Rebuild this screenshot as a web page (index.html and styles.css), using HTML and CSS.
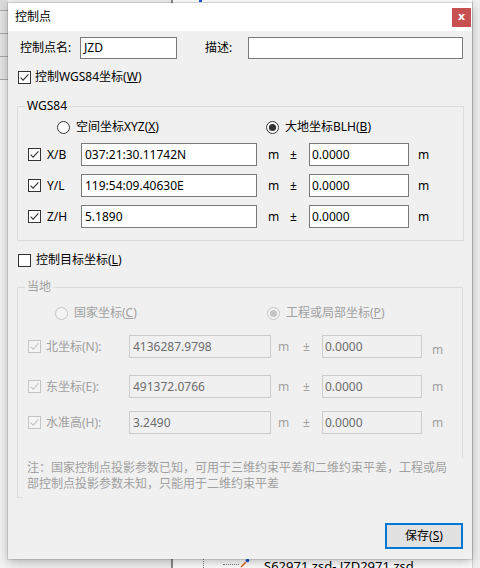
FILE: index.html
```html
<!DOCTYPE html>
<html lang="zh-CN">
<head>
<meta charset="utf-8">
<title>控制点</title>
<link rel="stylesheet" href="styles.css">
</head>
<body>
<div class="app">
  <div class="app-left">
    <div class="tb-btn tb-first"></div>
    <div class="tb-btn"></div>
    <div class="tb-btn"></div>
    <div class="tb-btn"></div>
  </div>
  <div class="app-mid">
    <div class="app-top">
      <div class="top-panel"></div>
      <div class="top-main"><span class="blue-mark"></span></div>
    </div>
    <div class="app-fill"></div>
    <div class="tree-row">
      <div class="panel-left"></div>
      <div class="tree">
        <span class="dot-v"></span>
        <span class="dot-h"></span>
        <svg class="tree-icon" width="10" height="10" viewBox="0 0 10 10"><path d="M1 9 L6 4" stroke="#e06a1b" stroke-width="1.6"/><circle cx="7.5" cy="2.5" r="1.8" fill="#1a56d6"/></svg>
        <span class="tree-text">S62971.zsd- JZD2971.zsd</span>
      </div>
    </div>
  </div>
  <div class="app-right"></div>

  <div class="dialog">
    <div class="titlebar">
      <span class="title">控制点</span>
      <span class="close">x</span>
    </div>
    <div class="dlg-body">
      <div class="row-name">
        <span class="lbl-name">控制点名:</span>
        <div class="txt txt-name">JZD</div>
        <span class="lbl-desc">描述:</span>
        <div class="txt txt-desc"></div>
      </div>

      <div class="chk-row">
        <svg class="chk" width="13" height="13" viewBox="0 0 13 13"><rect x="0.5" y="0.5" width="12" height="12" fill="#fff" stroke="#333"/><polyline points="2.6,6.6 5.1,9.1 10.4,3.4" fill="none" stroke="#333" stroke-width="1.1"/></svg>
        <span>控制WGS84坐标(<u>W</u>)</span>
      </div>

      <fieldset class="grp grp-wgs">
        <legend class="grp-legend">WGS84</legend>
        <div class="radio-row r1">
          <div class="radio-item ri-first">
            <svg width="13" height="13" viewBox="0 0 13 13"><circle cx="6.5" cy="6.5" r="6" fill="#fff" stroke="#333"/></svg>
            <span>空间坐标XYZ(<u>X</u>)</span>
          </div>
          <div class="radio-item">
            <svg width="13" height="13" viewBox="0 0 13 13"><circle cx="6.5" cy="6.5" r="6" fill="#fff" stroke="#333"/><circle cx="6.5" cy="6.5" r="3.6" fill="#333"/></svg>
            <span>大地坐标BLH(<u>B</u>)</span>
          </div>
        </div>

        <div class="data-row dr1 first">
          <svg class="chk" width="13" height="13" viewBox="0 0 13 13"><rect x="0.5" y="0.5" width="12" height="12" fill="#fff" stroke="#333"/><polyline points="2.6,6.6 5.1,9.1 10.4,3.4" fill="none" stroke="#333" stroke-width="1.1"/></svg>
          <span class="dlbl">X/B</span>
          <div class="txt val1">037:21:30.11742N</div>
          <span class="unit">m</span>
          <span class="pm">±</span>
          <div class="txt val2">0.0000</div>
          <span class="unit2">m</span>
        </div>
        <div class="data-row dr1">
          <svg class="chk" width="13" height="13" viewBox="0 0 13 13"><rect x="0.5" y="0.5" width="12" height="12" fill="#fff" stroke="#333"/><polyline points="2.6,6.6 5.1,9.1 10.4,3.4" fill="none" stroke="#333" stroke-width="1.1"/></svg>
          <span class="dlbl">Y/L</span>
          <div class="txt val1">119:54:09.40630E</div>
          <span class="unit">m</span>
          <span class="pm">±</span>
          <div class="txt val2">0.0000</div>
          <span class="unit2">m</span>
        </div>
        <div class="data-row dr1">
          <svg class="chk" width="13" height="13" viewBox="0 0 13 13"><rect x="0.5" y="0.5" width="12" height="12" fill="#fff" stroke="#333"/><polyline points="2.6,6.6 5.1,9.1 10.4,3.4" fill="none" stroke="#333" stroke-width="1.1"/></svg>
          <span class="dlbl">Z/H</span>
          <div class="txt val1">5.1890</div>
          <span class="unit">m</span>
          <span class="pm">±</span>
          <div class="txt val2">0.0000</div>
          <span class="unit2">m</span>
        </div>
      </fieldset>

      <div class="chk-row chk-row2">
        <svg class="chk" width="13" height="13" viewBox="0 0 13 13"><rect x="0.5" y="0.5" width="12" height="12" fill="#fff" stroke="#333"/></svg>
        <span>控制目标坐标(<u>L</u>)</span>
      </div>

      <fieldset class="grp grp-local">
        <legend class="grp-legend dis">当地</legend>
        <div class="radio-row r2">
          <div class="radio-item ri-first2 dis">
            <svg width="13" height="13" viewBox="0 0 13 13"><circle cx="6.5" cy="6.5" r="6" fill="#f4f4f4" stroke="#c4c4c4"/></svg>
            <span>国家坐标(<u>C</u>)</span>
          </div>
          <div class="radio-item dis">
            <svg width="13" height="13" viewBox="0 0 13 13"><circle cx="6.5" cy="6.5" r="6" fill="#f4f4f4" stroke="#c4c4c4"/><circle cx="6.5" cy="6.5" r="3.6" fill="#c4c4c4"/></svg>
            <span>工程或局部坐标(<u>P</u>)</span>
          </div>
        </div>

        <div class="data-row dr2 d1">
          <svg class="chk" width="13" height="13" viewBox="0 0 13 13"><rect x="0.5" y="0.5" width="12" height="12" fill="#f4f4f4" stroke="#c4c4c4"/><polyline points="2.6,6.6 5.1,9.1 10.4,3.4" fill="none" stroke="#c4c4c4" stroke-width="1.1"/></svg>
          <span class="dlbl2">北坐标(N):</span>
          <div class="txt dis-txt val3">4136287.9798</div>
          <span class="unit3">m</span>
          <span class="pm dis">±</span>
          <div class="txt dis-txt val2">0.0000</div>
          <span class="unit4 lower">m</span>
        </div>
        <div class="data-row dr2 d2">
          <svg class="chk" width="13" height="13" viewBox="0 0 13 13"><rect x="0.5" y="0.5" width="12" height="12" fill="#f4f4f4" stroke="#c4c4c4"/><polyline points="2.6,6.6 5.1,9.1 10.4,3.4" fill="none" stroke="#c4c4c4" stroke-width="1.1"/></svg>
          <span class="dlbl2">东坐标(E):</span>
          <div class="txt dis-txt val3">491372.0766</div>
          <span class="unit3">m</span>
          <span class="pm dis">±</span>
          <div class="txt dis-txt val2">0.0000</div>
          <span class="unit4">m</span>
        </div>
        <div class="data-row dr2 d3">
          <svg class="chk" width="13" height="13" viewBox="0 0 13 13"><rect x="0.5" y="0.5" width="12" height="12" fill="#f4f4f4" stroke="#c4c4c4"/><polyline points="2.6,6.6 5.1,9.1 10.4,3.4" fill="none" stroke="#c4c4c4" stroke-width="1.1"/></svg>
          <span class="dlbl2">水准高(H):</span>
          <div class="txt dis-txt val3">3.2490</div>
          <span class="unit3">m</span>
          <span class="pm dis">±</span>
          <div class="txt dis-txt val2">0.0000</div>
          <span class="unit4">m</span>
        </div>

        <div class="note">注：国家控制点投影参数已知，可用于三维约束平差和二维约束平差，工程或局部控制点投影参数未知，只能用于二维约束平差</div>
      </fieldset>

      <div class="btn-save">保存(<u>S</u>)</div>
    </div>
  </div>
</div>
</body>
</html>
```

FILE: styles.css
```css
* { box-sizing: border-box; }
html, body { margin: 0; padding: 0; }
body {
  width: 480px;
  height: 568px;
  overflow: hidden;
  font-family: "Noto Sans", "Noto Sans CJK SC", sans-serif;
  font-size: 12px;
  color: #000;
  background: #fff;
}
.app {
  position: relative;
  width: 480px;
  height: 568px;
  display: flex;
}
.app-left {
  width: 8px;
  background: #f3f3f3;
  display: flex;
  flex-direction: column;
}
.tb-btn {
  height: 23px;
  background: #e4e4e4;
  border-bottom: 1px solid #a8a8a8;
}
.tb-first { height: 11px; background: #dcdcdc; }
.app-mid {
  flex: 1;
  display: flex;
  flex-direction: column;
}
.app-top {
  height: 3px;
  display: flex;
}
.top-panel {
  width: 165px;
  background: #f0f0f0;
  border-right: 2px solid #8a8a8a;
}
.top-main { flex: 1; position: relative; background: #fff; }
.blue-mark {
  position: absolute;
  left: 26px; top: 0;
  width: 3px; height: 2px;
  background: #1a56d6;
}
.app-fill { flex: 1; background: #f5f5f5; }
.tree-row {
  height: 10px;
  display: flex;
}
.panel-left {
  width: 165px;
  background: #f3f3f3;
  border-right: 2px solid #8a8a8a;
}
.tree {
  flex: 1;
  background: #fff;
  display: flex;
  align-items: flex-start;
  overflow: hidden;
}
.dot-v {
  margin-left: 30px;
  width: 1px;
  height: 10px;
  border-left: 1px dotted #808080;
}
.dot-h {
  margin-left: 19px;
  margin-top: 6px;
  width: 16px;
  border-top: 1px dotted #808080;
}
.tree-icon { margin-left: 1px; margin-top: 0; flex: none; }
.tree-text {
  margin-left: 14px;
  line-height: 16px;
  font-size: 13px;
  margin-top: 0;
  white-space: nowrap;
}
.app-right { width: 8px; background: #f0f0f0; border-left: 1px solid #d8d8d8; }

/* dialog */
.dialog {
  position: absolute;
  left: 8px;
  top: 3px;
  width: 464px;
  height: 556px;
  display: flex;
  flex-direction: column;
  background: #f0f0f0;
  box-shadow: 0 0 0 1px rgba(0,0,0,0.10), 0 3px 10px rgba(0,0,0,0.28);
}
.titlebar {
  height: 28px;
  background: #fff;
  display: flex;
  align-items: center;
  padding-left: 7px;
}
.title { line-height: 16px; margin-top: 0; }
.close {
  margin-left: auto;
  margin-right: 1px;
  align-self: flex-start;
  margin-top: 5px;
  width: 19px;
  height: 19px;
  background: #c75050;
  color: #fff;
  font-family: "DejaVu Sans", sans-serif;
  font-weight: bold;
  font-size: 11px;
  line-height: 16px;
  display: flex;
  align-items: center;
  justify-content: center;
  padding-bottom: 2px;
}
.dlg-body {
  flex: 1;
  display: flex;
  flex-direction: column;
  padding-top: 6px;
}
.row-name {
  display: flex;
  align-items: center;
  height: 22px;
  padding-left: 12px;
}
.lbl-name { width: 60px; line-height: 16px; }
.lbl-desc { width: 43px; margin-left: 28px; line-height: 16px; }
.txt {
  height: 22px;
  border: 1px solid #7a7a7a;
  background: #fff;
  padding: 0 3px;
  display: flex;
  align-items: center;
  line-height: 16px;
  white-space: nowrap;
  flex: none;
}
.txt-name { width: 97px; }
.txt-desc { width: 215px; }

.chk-row {
  display: flex;
  align-items: center;
  gap: 4px;
  height: 16px;
  margin-top: 10px;
  padding-left: 10px;
  line-height: 16px;
}
.chk-row2 { margin-top: 11px; gap: 5px; }
.chk, .radio-item svg { flex: none; display: block; }
u { text-decoration: underline; text-underline-offset: 1px; }

.grp {
  margin: 13px 8px 0 9px;
  padding: 0;
  border: 1px solid #dcdcdc;
  min-inline-size: 0;
}
.grp-wgs { padding-bottom: 12px; }
.grp-local { margin-top: 11px; margin-right: 9px; }
.grp-legend {
  margin-left: 7px;
  padding: 0 2px;
  line-height: 16px;
  height: 16px;
}
.dis { color: #a0a0a0; }

.radio-row {
  display: flex;
  height: 16px;
  line-height: 16px;
}
.r1 { margin-top: 5px; padding-left: 39px; }
.r2 { margin-top: 10px; padding-left: 37px; }
.radio-item {
  display: flex;
  align-items: center;
  gap: 6px;
}
.ri-first { width: 209px; }
.ri-first2 { width: 212px; }

.data-row {
  display: flex;
  align-items: center;
  height: 23px;
  padding-left: 10px;
}
.dr1 { margin-top: 8px; }
.dlbl { width: 34px; margin-left: 6px; line-height: 16px; }
.val1 { width: 176px; height: 23px; }
.val2 { width: 100px; height: 23px; padding-left: 2px; }
.unit { width: 33px; padding-left: 11px; line-height: 16px; }
.pm { width: 19px; line-height: 16px; }
.unit2 { padding-left: 9px; line-height: 16px; }

.d1 { margin-top: 14px; }
.d2 { margin-top: 17px; }
.d3 { margin-top: 13px; }
.dlbl2 { width: 83px; margin-left: 5px; line-height: 16px; color: #a0a0a0; }
.val3 { width: 142px; height: 23px; }
.dis-txt {
  background: #f0f0f0;
  border-color: #cccccc;
  color: #6d6d6d;
}
.unit3 { width: 32px; padding-left: 7px; line-height: 16px; color: #a0a0a0; }
.unit4 { padding-left: 10px; line-height: 16px; color: #a0a0a0; }
.unit4.lower { margin-top: 6px; }

.note {
  position: relative;
  z-index: 1;
  margin: 24px -6px -3px 5px;
  padding: 2px 14px 8px 4px;
  background: #f0f0f0;
  color: #a0a0a0;
  line-height: 16px;
}

.btn-save {
  align-self: flex-end;
  margin-top: 25px;
  margin-right: 9px;
  width: 78px;
  height: 26px;
  border: 2px solid #0078d7;
  background: #e1e1e1;
  display: flex;
  align-items: center;
  justify-content: center;
  line-height: 16px;
}
```
